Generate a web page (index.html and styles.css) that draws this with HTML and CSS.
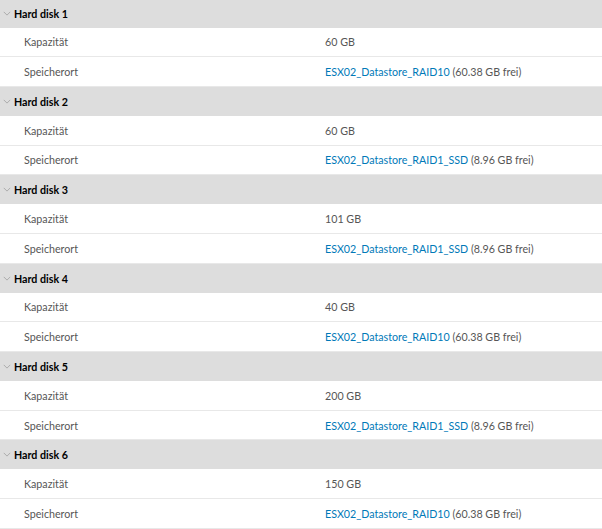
FILE: index.html
```html
<!DOCTYPE html>
<html lang="de">
<head>
  <meta charset="UTF-8">
  <title>Hard disks</title>
  <link rel="stylesheet" href="styles.css">
</head>
<body>
  <div class="disk-list">
    <div class="disk">
      <div class="disk-head"><svg class="chevron" viewBox="0 0 10 6"><path d="M1 1l4 4 4-4"/></svg>Hard disk 1</div>
      <div class="row"><span class="label">Kapazität</span><span class="value">60 GB</span></div>
      <div class="row"><span class="label">Speicherort</span><span class="value"><a href="#">ESX02_Datastore_RAID10</a> (60.38 GB frei)</span></div>
    </div>
    <div class="disk">
      <div class="disk-head"><svg class="chevron" viewBox="0 0 10 6"><path d="M1 1l4 4 4-4"/></svg>Hard disk 2</div>
      <div class="row"><span class="label">Kapazität</span><span class="value">60 GB</span></div>
      <div class="row"><span class="label">Speicherort</span><span class="value"><a href="#">ESX02_Datastore_RAID1_SSD</a> (8.96 GB frei)</span></div>
    </div>
    <div class="disk">
      <div class="disk-head"><svg class="chevron" viewBox="0 0 10 6"><path d="M1 1l4 4 4-4"/></svg>Hard disk 3</div>
      <div class="row"><span class="label">Kapazität</span><span class="value">101 GB</span></div>
      <div class="row"><span class="label">Speicherort</span><span class="value"><a href="#">ESX02_Datastore_RAID1_SSD</a> (8.96 GB frei)</span></div>
    </div>
    <div class="disk">
      <div class="disk-head"><svg class="chevron" viewBox="0 0 10 6"><path d="M1 1l4 4 4-4"/></svg>Hard disk 4</div>
      <div class="row"><span class="label">Kapazität</span><span class="value">40 GB</span></div>
      <div class="row"><span class="label">Speicherort</span><span class="value"><a href="#">ESX02_Datastore_RAID10</a> (60.38 GB frei)</span></div>
    </div>
    <div class="disk">
      <div class="disk-head"><svg class="chevron" viewBox="0 0 10 6"><path d="M1 1l4 4 4-4"/></svg>Hard disk 5</div>
      <div class="row"><span class="label">Kapazität</span><span class="value">200 GB</span></div>
      <div class="row"><span class="label">Speicherort</span><span class="value"><a href="#">ESX02_Datastore_RAID1_SSD</a> (8.96 GB frei)</span></div>
    </div>
    <div class="disk">
      <div class="disk-head"><svg class="chevron" viewBox="0 0 10 6"><path d="M1 1l4 4 4-4"/></svg>Hard disk 6</div>
      <div class="row"><span class="label">Kapazität</span><span class="value">150 GB</span></div>
      <div class="row"><span class="label">Speicherort</span><span class="value"><a href="#">ESX02_Datastore_RAID10</a> (60.38 GB frei)</span></div>
    </div>
  </div>
</body>
</html>
```

FILE: styles.css
```css
body {
  margin: 0;
  font-family: 'Lato', 'Noto Sans', sans-serif;
  font-size: 10.7px;
  color: #565656;
  background-color: #fff;
}
.disk-list {
  display: flex;
  flex-direction: column;
  margin-top: -1.5px;
}
.disk-head {
  display: flex;
  align-items: center;
  height: 29px;
  background-color: #dddddd;
  color: #000;
  font-weight: bold;
  padding-left: 3px;
}
.chevron {
  width: 8px;
  height: 5px;
  margin-right: 3px;
  fill: none;
  stroke: #a0a0a0;
  stroke-width: 1;
}
.row {
  display: flex;
  align-items: center;
  height: 28.7px;
  border-bottom: 1px solid #e8e8e8;
}
.label {
  width: 301px;
  padding-left: 24px;
}
.value a {
  color: #0079b8;
  text-decoration: none;
}
```
